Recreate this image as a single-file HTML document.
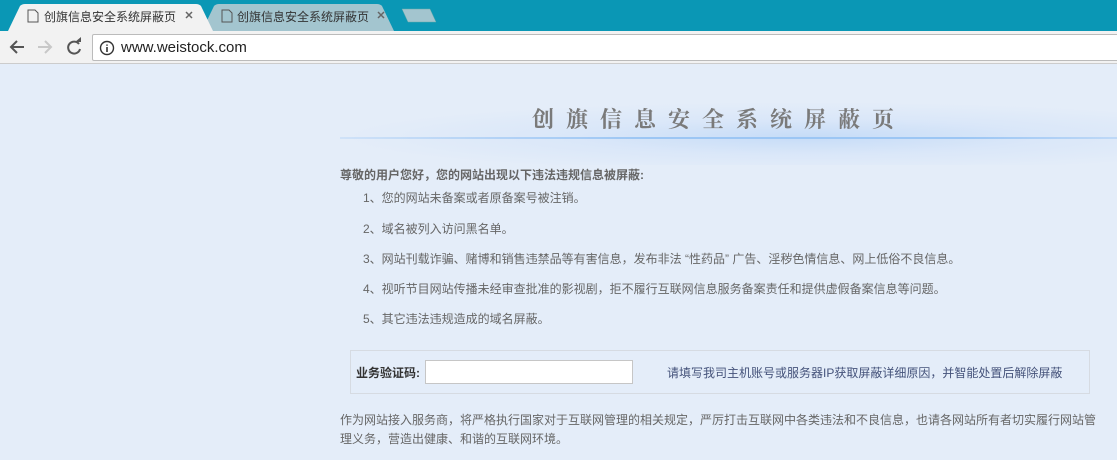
<!DOCTYPE html>
<html><head><meta charset="utf-8"><style>
*{margin:0;padding:0;box-sizing:border-box}
body{width:1117px;height:460px;overflow:hidden;background:#e4edf9;font-family:"Liberation Sans","Noto Sans CJK SC",sans-serif;position:relative}
.tabbar{position:absolute;left:0;top:0;width:1117px;height:31px;background:#0a97b5}
.tab{position:absolute;top:4px;height:27px;font-size:12px;line-height:27px;color:#333}
.tool{position:absolute;top:31px;left:0;width:1117px;height:33px;background:#f2f2f2;border-bottom:1px solid #ccc}
.url{position:absolute;left:92px;top:3px;width:1030px;height:27px;background:#fff;border:1px solid #bbb;border-radius:2px;font-size:15px;line-height:25px;padding-left:28px;color:#222}
.glow{position:absolute;left:340px;top:95px;width:777px;height:70px;background:radial-gradient(ellipse 60% 50% at 60% 60%,#c6dcf7 0%,#dae7f9 50%,rgba(228,237,249,0) 100%)}
.line{position:absolute;left:340px;top:137px;width:777px;height:2px;background:linear-gradient(90deg,rgba(160,200,245,0.3),#9cc6f4 40%,#9cc6f4 80%,rgba(160,200,245,0.5))}
.title{position:absolute;left:532px;top:103px;font-size:22px;letter-spacing:12px;color:#7a7a7a;font-family:"Liberation Serif","Noto Serif CJK SC",serif;font-weight:bold;white-space:nowrap}
.t{position:absolute;font-size:12px;color:#666;white-space:nowrap}
</style></head><body>
<div class="tabbar">
 <svg width="460" height="31" style="position:absolute;left:0;top:0">
  <path d="M202 31 L214 6 Q216 4 219 4 L377 4 Q380 4 382 6 L394 31Z" fill="#a3c5cf"/>
  <path d="M402 9 L430 9 L436 22 L408 22Z" fill="#a3c5cf" stroke="#6aa" stroke-width="0.5"/>
  <path d="M8 31 L20 6 Q22 4 25 4 L196 4 Q199 4 201 6 L213 31Z" fill="#f2f2f2"/>
  <path d="M28 10 h7 l3 3 v9 h-10z" fill="none" stroke="#555" stroke-width="1"/>
  <path d="M222 10 h7 l3 3 v9 h-10z" fill="none" stroke="#555" stroke-width="1"/>
  <path d="M186 12 l6 6 M192 12 l-6 6 M378 12 l6 6 M384 12 l-6 6" stroke="#666" stroke-width="1.5"/>
 </svg>
 <div class="tab" style="left:44px">创旗信息安全系统屏蔽页</div>
 <div class="tab" style="left:237px">创旗信息安全系统屏蔽页</div>
</div>
<div class="tool">
 <svg width="92" height="33" style="position:absolute;left:0;top:0">
  <path d="M24 16 h-13 M17 10 l-6 6 6 6" stroke="#555" stroke-width="2" fill="none"/>
  <path d="M38 16 h13 M45 10 l6 6 -6 6" stroke="#c8c8c8" stroke-width="2" fill="none"/>
  <path d="M79 13 A6 6 0 1 0 80 18" stroke="#555" stroke-width="2" fill="none"/><path d="M75 11 h6 v-5z" fill="#555"/>
 </svg>
 <div class="url"><svg width="16" height="16" style="position:absolute;left:6px;top:5px"><circle cx="8" cy="8" r="6.5" stroke="#333" stroke-width="1.4" fill="none"/><path d="M8 7v5M8 4.5v1.2" stroke="#333" stroke-width="1.6"/></svg>www.weistock.com</div>
</div>
<div class="glow"></div><div class="line"></div>
<div class="title">创旗信息安全系统屏蔽页</div>
<div class="t" style="left:340px;top:166px;font-weight:bold;color:#666">尊敬的用户您好，您的网站出现以下违法违规信息被屏蔽:</div>
<div class="t" style="left:363px;top:189px">1、您的网站未备案或者原备案号被注销。</div>
<div class="t" style="left:363px;top:220px">2、域名被列入访问黑名单。</div>
<div class="t" style="left:363px;top:250px">3、网站刊载诈骗、赌博和销售违禁品等有害信息，发布非法 “性药品” 广告、淫秽色情信息、网上低俗不良信息。</div>
<div class="t" style="left:363px;top:280px">4、视听节目网站传播未经审查批准的影视剧，拒不履行互联网信息服务备案责任和提供虚假备案信息等问题。</div>
<div class="t" style="left:363px;top:310px">5、其它违法违规造成的域名屏蔽。</div>
<div style="position:absolute;left:350px;top:350px;width:740px;height:44px;border:1px solid #d6dbe2"></div>
<div class="t" style="left:356px;top:364px;font-weight:bold;color:#333">业务验证码:</div>
<div style="position:absolute;left:425px;top:360px;width:208px;height:24px;background:#fff;border:1px solid #c6c6c6"></div>
<div class="t" style="left:667px;top:364px;color:#44527a">请填写我司主机账号或服务器IP获取屏蔽详细原因，并智能处置后解除屏蔽</div>
<div class="t" style="left:340px;top:411px;white-space:normal;width:760px;line-height:19px">作为网站接入服务商，将严格执行国家对于互联网管理的相关规定，严厉打击互联网中各类违法和不良信息，也请各网站所有者切实履行网站管理义务，营造出健康、和谐的互联网环境。</div>
</body></html>
